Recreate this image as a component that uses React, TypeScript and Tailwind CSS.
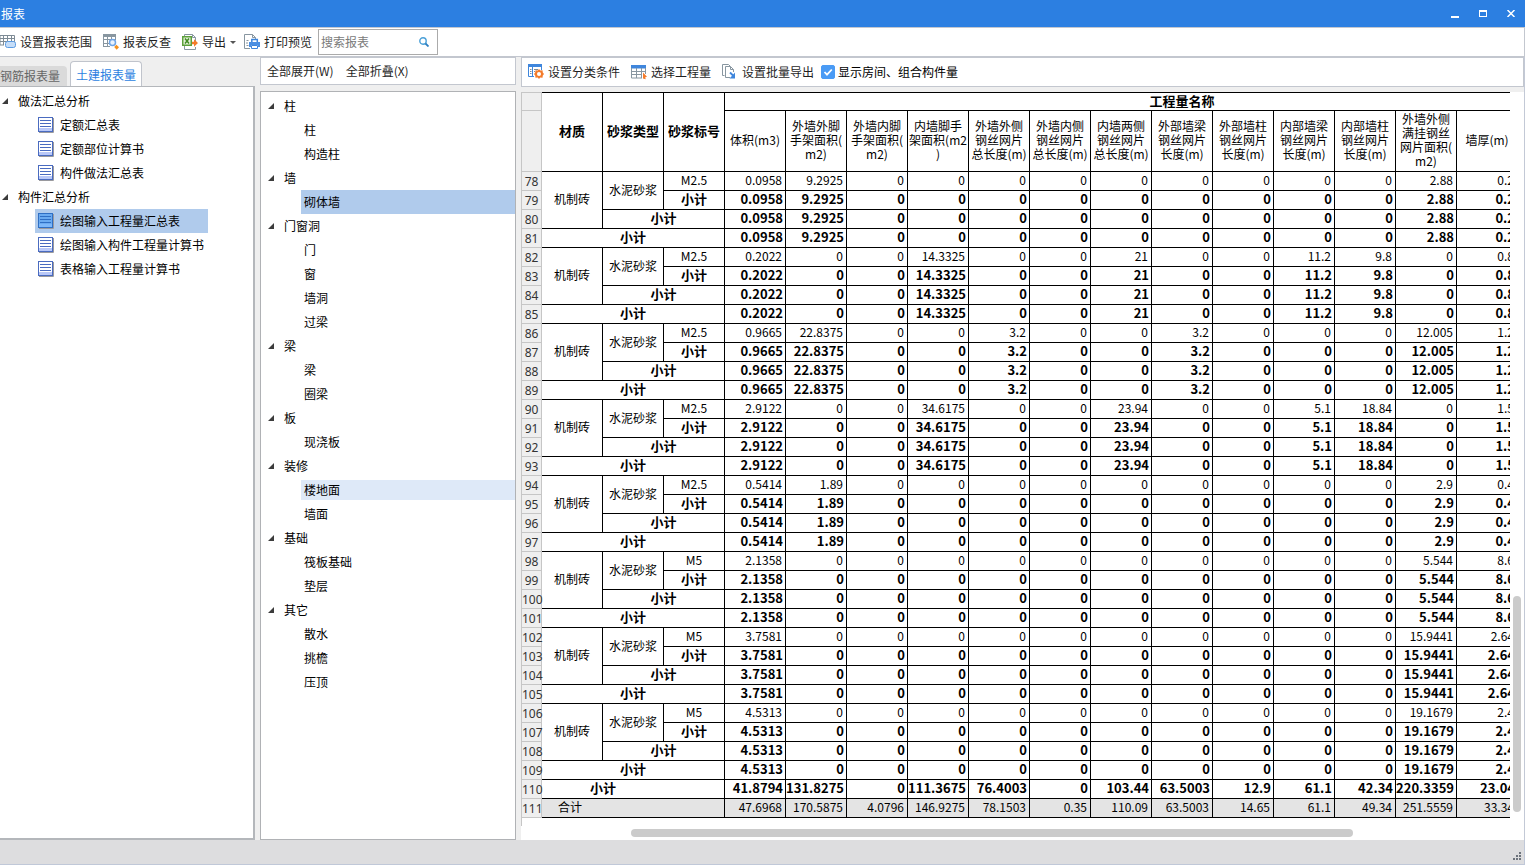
import type { ReactNode } from "react";

const sheetColumns = [
  ["体积(m3)"],
  ["外墙外脚", "手架面积(", "m2)"],
  ["外墙内脚", "手架面积(", "m2)"],
  ["内墙脚手", "架面积(m2", ")"],
  ["外墙外侧", "钢丝网片", "总长度(m)"],
  ["外墙内侧", "钢丝网片", "总长度(m)"],
  ["内墙两侧", "钢丝网片", "总长度(m)"],
  ["外部墙梁", "钢丝网片", "长度(m)"],
  ["外部墙柱", "钢丝网片", "长度(m)"],
  ["内部墙梁", "钢丝网片", "长度(m)"],
  ["内部墙柱", "钢丝网片", "长度(m)"],
  ["外墙外侧", "满挂钢丝", "网片面积(", "m2)"],
  ["墙厚(m)"],
];

const groups = [
  { start: 78, grade: "M2.5", values: "0.0958 9.2925 0 0 0 0 0 0 0 0 0 2.88 0.2" },
  { start: 82, grade: "M2.5", values: "0.2022 0 0 14.3325 0 0 21 0 0 11.2 9.8 0 0.8" },
  { start: 86, grade: "M2.5", values: "0.9665 22.8375 0 0 3.2 0 0 3.2 0 0 0 12.005 1.2" },
  { start: 90, grade: "M2.5", values: "2.9122 0 0 34.6175 0 0 23.94 0 0 5.1 18.84 0 1.5" },
  { start: 94, grade: "M2.5", values: "0.5414 1.89 0 0 0 0 0 0 0 0 0 2.9 0.4" },
  { start: 98, grade: "M5", values: "2.1358 0 0 0 0 0 0 0 0 0 0 5.544 8.6" },
  { start: 102, grade: "M5", values: "3.7581 0 0 0 0 0 0 0 0 0 0 15.9441 2.64" },
  { start: 106, grade: "M5", values: "4.5313 0 0 0 0 0 0 0 0 0 0 19.1679 2.4" },
];

const subtotal = "41.8794 131.8275 0 111.3675 76.4003 0 103.44 63.5003 12.9 61.1 42.34 220.3359 23.04";
const total = "47.6968 170.5875 4.0796 146.9275 78.1503 0.35 110.09 63.5003 14.65 61.1 49.34 251.5559 33.34";

const reportTree = [
  { name: "做法汇总分析", items: ["定额汇总表", "定额部位计算书", "构件做法汇总表"] },
  { name: "构件汇总分析", items: ["绘图输入工程量汇总表", "绘图输入构件工程量计算书", "表格输入工程量计算书"] },
];

const componentTree = [
  { name: "柱", items: ["柱", "构造柱"] },
  { name: "墙", items: ["砌体墙"] },
  { name: "门窗洞", items: ["门", "窗", "墙洞", "过梁"] },
  { name: "梁", items: ["梁", "圈梁"] },
  { name: "板", items: ["现浇板"] },
  { name: "装修", items: ["楼地面", "墙面"] },
  { name: "基础", items: ["筏板基础", "垫层"] },
  { name: "其它", items: ["散水", "挑檐", "压顶"] },
];

/* ---------- icons ---------- */

function RangeIcon() {
  return (
    <svg width="16" height="16" viewBox="0 0 16 16" fill="none">
      <path d="M0 1.5h14.5v7M0 1.5v9.500h4M0 4.500h14.500M0 7.500h14M3.500 1.500v9.500M7.500 1.500v6M11.500 1.500v6" stroke="#7e8b95" />
      <rect x="5.500" y="7.500" width="10" height="6" rx="2" fill="#c5ddf8" stroke="#5b9be2" />
    </svg>
  );
}

function CheckReportIcon() {
  return (
    <svg width="16" height="16" viewBox="0 0 16 16" fill="none">
      <path d="M0 0h13v3H0z" fill="#8896a0" />
      <path d="M.5 1v12M0 5.500h12M0 9.500h7M0 12.500h7M4.500 3v10M8.500 3v3M12.500 1v5" stroke="#8896a0" />
      <circle cx="9.500" cy="8.500" r="3" fill="#eaf3fd" stroke="#6fa5e6" strokeWidth="1.500" />
      <path d="M11.200 13l2.200-2.200 2.600 2.500-2.300 2.500z" fill="#f5921e" />
    </svg>
  );
}

function ExportIcon() {
  return (
    <svg width="16" height="16" viewBox="0 0 16 16" fill="none">
      <path d="M2.500 3V.5h8l3 3V7M10.500.5v3h3M2.500 12v3.500h11V13" stroke="#8896a0" />
      <rect x=".75" y="2.750" width="8.500" height="8.500" fill="#e6f2dc" stroke="#5da03c" strokeWidth="1.500" />
      <path d="M3 4.500l4 5M7 4.500l-4 5" stroke="#3f8a20" strokeWidth="1.500" />
      <path d="M10 7.800h2V5.300L16 9l-4 3.700v-2.500h-2z" fill="#f47b2a" />
    </svg>
  );
}

function PrintIcon() {
  return (
    <svg width="16" height="16" viewBox="0 0 16 16" fill="none">
      <path d="M6 14.500H.5V.5h8l3 3V5M8.500.5v3h3" stroke="#8896a0" />
      <path d="M2.500 6h2v1h-2zM2.500 8h1v2h-1zM2.500 11h2v1h-2z" fill="#8896a0" />
      <path d="M7.800 8.500v-3h5.500v3" stroke="#3f86dc" strokeWidth="1.500" />
      <path d="M5 8h11v5h-2v-2H7v2H5z" fill="#4b8fe2" />
      <path d="M7.500 11.500h6v3h-6z" fill="#fff" stroke="#3f86dc" />
    </svg>
  );
}

function ConditionIcon() {
  return (
    <svg width="16" height="16" viewBox="0 0 16 16" fill="none">
      <path d="M0 0h14v3H0z" fill="#3f86dc" />
      <path d="M.5 2v10.500H6M4.500 3v9.500M13.500 3v3" stroke="#3f86dc" />
      <path d="M2 5.500h1.500M2 7.500h1.500M2 9.500h1.500M6 5.500h4M6 7.500h1" stroke="#7e8b95" />
      <path d="M11 5l1.300 1.500 2.200-.2.300 2.200L16 10l-1.200 1.500-.3 2.200-2.200-.2L11 15l-1.300-1.500-2.200.2-.3-2.200L6 10l1.200-1.500.3-2.200 2.200.2z" fill="#f47b2a" />
      <circle cx="11" cy="10" r="2" fill="#fff" />
    </svg>
  );
}

function QuantityIcon() {
  return (
    <svg width="16" height="16" viewBox="0 0 16 16" fill="none">
      <path d="M0 1h15v3.500H0z" fill="#3f86dc" />
      <path d="M.5 4v10H11M0 7.500h14.500M0 10.500h11M5.500 4v10M10.500 4v10M14.500 4v6" stroke="#8896a0" />
      <path d="M12 8.500l4 4.300-1.800.4.500 2-2.700-.7z" fill="#f47b2a" />
    </svg>
  );
}

function BatchIcon() {
  return (
    <svg width="16" height="16" viewBox="0 0 16 16" fill="none">
      <path d="M2.500 11.500h-2V.5h6l1.500 1.500" stroke="#8896a0" />
      <path d="M8 13.500H3.500v-11h5l3 3V8M8.500 2.500v3h3" stroke="#8896a0" />
      <path d="M8 8.500l4 4" stroke="#3f86dc" strokeWidth="1.800" />
      <path d="M13 8.500v6H7.500z" fill="#3f86dc" />
    </svg>
  );
}

function ReportIcon({ active }: { active?: boolean }) {
  const line = active ? "#2f6fc4" : "#4a6bc0";
  return (
    <svg width="16" height="16" viewBox="0 0 16 16" fill="none" className="shrink-0">
      <path d="M1 15.500h14.500V1" stroke="#9a9a9e" />
      <rect x=".5" y=".5" width="14" height="14" fill={active ? "#6aaaf0" : "#fff"} stroke={line} />
      <path d="M1 11h13v3H1z" fill={active ? "#7db8fa" : "#b9c8f8"} />
      <path d="M2 3.500h11M2 6.500h11M2 9.500h11" stroke={line} />
    </svg>
  );
}

function Arrow() {
  return (
    <svg width="6" height="6" viewBox="0 0 6 6" className="shrink-0">
      <path d="M6 0v6H0z" fill="#3c3c3c" />
    </svg>
  );
}

/* ---------- parts ---------- */

function ToolButton({ icon, children }: { icon?: ReactNode; children: ReactNode }) {
  return (
    <button type="button" className="flex h-6 shrink-0 items-center gap-1 whitespace-nowrap text-[#1f1f1f]">
      {icon}
      {children}
    </button>
  );
}

function Values({ row, bold }: { row: string; bold?: boolean }) {
  return (
    <>
      {row.split(" ").map((value, i) => (
        <td
          key={i}
          className={`border-b border-r border-black pb-0.5 text-right ${bold ? "pr-0.5 text-[13px] font-bold" : "pr-[3px]"}`}
        >
          {value}
        </td>
      ))}
    </>
  );
}

function RowNumber({ n }: { n: number }) {
  return (
    <th scope="row" className="border-x border-b border-[#c6c6c6] bg-[#efefef] pt-0.5 font-['Noto_Sans','Open_Sans',sans-serif] font-normal text-[#333]">
      {n}
    </th>
  );
}

const cell = "border-b border-r border-black pb-0.5 text-center";
const boldCell = "border-b border-r border-black pb-0.5 text-center text-[13px] font-bold";

function Sheet() {
  return (
    <table className="w-[1119px] table-fixed border-separate border-spacing-0 whitespace-nowrap leading-[14px] text-black">
      <colgroup>
        <col className="w-[21px]" />
        <col span={18} className="w-[61px]" />
      </colgroup>
      <thead>
        <tr className="h-[19px]">
          <td className="border border-[#c6c6c6] bg-[#efefef]"></td>
          <th rowSpan={2} className={`${boldCell} border-t`}>材质</th>
          <th rowSpan={2} className={`${boldCell} border-t`}>砂浆类型</th>
          <th rowSpan={2} className={`${boldCell} border-t`}>砂浆标号</th>
          <th colSpan={15} className={`${boldCell} border-t`}>工程量名称</th>
        </tr>
        <tr className="h-[61px]">
          <td className="border-x border-b border-[#c6c6c6] bg-[#efefef]"></td>
          {sheetColumns.map((lines, i) => (
            <th key={i} className={`${cell} font-normal`}>
              {lines.map((line) => (
                <span key={line} className="block">{line}</span>
              ))}
            </th>
          ))}
        </tr>
      </thead>
      {groups.map((g) => (
        <tbody key={g.start}>
          <tr className="h-[19px]">
            <RowNumber n={g.start} />
            <td rowSpan={3} className={cell}>机制砖</td>
            <td rowSpan={2} className={cell}>水泥砂浆</td>
            <td className={cell}>{g.grade}</td>
            <Values row={g.values} />
          </tr>
          <tr className="h-[19px]">
            <RowNumber n={g.start + 1} />
            <td className={boldCell}>小计</td>
            <Values row={g.values} bold />
          </tr>
          <tr className="h-[19px]">
            <RowNumber n={g.start + 2} />
            <td colSpan={2} className={boldCell}>小计</td>
            <Values row={g.values} bold />
          </tr>
          <tr className="h-[19px]">
            <RowNumber n={g.start + 3} />
            <td colSpan={3} className={boldCell}>小计</td>
            <Values row={g.values} bold />
          </tr>
        </tbody>
      ))}
      <tfoot>
        <tr className="h-[19px]">
          <RowNumber n={110} />
          <td colSpan={3} className="border-b border-r border-black pb-0.5 pl-12 text-[13px] font-bold">小计</td>
          <Values row={subtotal} bold />
        </tr>
        <tr className="h-[19px] bg-[#e4e4e4]">
          <RowNumber n={111} />
          <td colSpan={3} className="border-b border-r border-black pb-0.5 pl-4">合计</td>
          <Values row={total} />
        </tr>
      </tfoot>
    </table>
  );
}

export default function App() {
  return (
    <div className="flex min-h-screen flex-col overflow-hidden bg-[#efefef] font-['Noto_Sans_CJK_SC',sans-serif] text-xs text-black">
      <header className="flex h-[27px] items-center justify-between bg-[#2c7fe1] pl-px text-white">
        <h1>报表</h1>
        <div className="flex items-center gap-3 pr-1.5">
          <button type="button" aria-label="最小化" className="flex w-4 justify-center">
            <svg width="8" height="8" viewBox="0 0 8 8"><path d="M0 6h8v2H0z" fill="#fff" /></svg>
          </button>
          <button type="button" aria-label="最大化" className="flex w-4 justify-center">
            <svg width="8" height="7" viewBox="0 0 8 7"><path d="M0 0h8v7H0zM1 2v4h6V2z" fill="#fff" fillRule="evenodd" /></svg>
          </button>
          <button type="button" aria-label="关闭" className="flex w-4 justify-center">
            <svg width="8" height="7" viewBox="0 0 8 7"><path d="M.5 0l7 7M7.500 0l-7 7" stroke="#fff" strokeWidth="1.500" /></svg>
          </button>
        </div>
      </header>

      <div className="flex h-[30px] items-center gap-[11px] border-y border-r border-[#c3c7cf] bg-white">
        <ToolButton icon={<RangeIcon />}>设置报表范围</ToolButton>
        <ToolButton icon={<CheckReportIcon />}>报表反查</ToolButton>
        <div className="flex gap-2">
          <ToolButton icon={<ExportIcon />}>
            导出
            <svg width="6" height="3" viewBox="0 0 6 3"><path d="M0 0h6L3 3z" fill="#555" /></svg>
          </ToolButton>
          <ToolButton icon={<PrintIcon />}>打印预览</ToolButton>
        </div>
        <div className="-ml-[5px] flex h-[26px] w-[120px] items-center border border-[#ababab] pl-0.5 pr-2">
          <input
            type="text"
            aria-label="搜索报表"
            placeholder="搜索报表"
            className="w-full min-w-0 bg-transparent outline-none placeholder:text-[#7a7a7a]"
          />
          <svg width="10" height="10" viewBox="0 0 10 10" fill="none" className="shrink-0">
            <circle cx="4" cy="4" r="3.200" stroke="#4ba0d8" strokeWidth="1.400" />
            <path d="M6.500 6.500l3 3" stroke="#2f7fc0" strokeWidth="1.800" />
          </svg>
        </div>
      </div>

      <main className="flex grow gap-[5px] border-r border-[#c3c9d6]">
        <section className="flex w-[255px] shrink-0 flex-col">
          <div className="flex h-[29px] items-end gap-[3px]">
            <button type="button" className="h-5 w-[67px] rounded-tr-sm bg-[#dadada] text-left text-[#666]">钢筋报表量</button>
            <button type="button" className="-mb-px h-[26px] w-[72px] rounded-t-sm border border-b-0 border-[#c0c4cc] bg-white text-[#2c7fe1]">
              土建报表量
            </button>
          </div>
          <div className="grow border-b-2 border-r-2 border-t border-[#b4b7bb] bg-white pt-0.5">
            <ul className="w-max">
              {reportTree.map((node) => (
                <li key={node.name}>
                  <div className="flex h-6 items-center gap-2.5 pl-0.5"><Arrow />{node.name}</div>
                  <ul>
                    {node.items.map((item) => (
                      <li
                        key={item}
                        className={`ml-[35px] flex h-6 items-center gap-1.5 pl-[3px] pr-1 ${item === "绘图输入工程量汇总表" ? "bg-[#b0cbec]" : ""}`}
                      >
                        <ReportIcon active={item === "绘图输入工程量汇总表"} />
                        {item}
                      </li>
                    ))}
                  </ul>
                </li>
              ))}
            </ul>
          </div>
        </section>

        <section className="flex w-64 shrink-0 flex-col gap-1.5">
          <div className="flex h-7 items-center gap-3 border border-[#c3c7cf] bg-white pl-1.5">
            <ToolButton>全部展开(W)</ToolButton>
            <ToolButton>全部折叠(X)</ToolButton>
          </div>
          <div className="grow border border-[#b0b2b5] bg-white pt-0.5">
            <ul>
              {componentTree.map((node) => (
                <li key={node.name}>
                  <div className="flex h-6 items-center gap-2.5 pl-[7px]"><Arrow />{node.name}</div>
                  <ul>
                    {node.items.map((item) => (
                      <li key={item} className="ml-10 flex h-6 items-center">
                        <span
                          className={`flex w-full items-center pl-[3px] ${item === "砌体墙" ? "h-6 bg-[#b0cbec]" : item === "楼地面" ? "h-5 bg-[#dee9f8]" : ""}`}
                        >
                          {item}
                        </span>
                      </li>
                    ))}
                  </ul>
                </li>
              ))}
            </ul>
          </div>
        </section>

        <section className="flex min-w-0 grow flex-col gap-[5px]">
          <div className="flex h-[30px] items-center gap-[11px] border border-[#c3c7cf] bg-white pl-1.5">
            <ToolButton icon={<ConditionIcon />}>设置分类条件</ToolButton>
            <ToolButton icon={<QuantityIcon />}>选择工程量</ToolButton>
            <ToolButton icon={<BatchIcon />}>设置批量导出</ToolButton>
            <label className="-ml-1 flex items-center gap-[3px] whitespace-nowrap">
              <span className="grid size-3.5">
                <input type="checkbox" defaultChecked className="peer col-start-1 row-start-1 size-3.5 appearance-none rounded-xs border border-[#4a9bf5] bg-white checked:bg-[#4a9bf5]" />
                <svg viewBox="0 0 14 14" fill="none" className="pointer-events-none invisible col-start-1 row-start-1 size-3.5 peer-checked:visible">
                  <path d="M3.500 7l2.500 2.700 4.800-5.200" stroke="#fff" strokeWidth="1.800" />
                </svg>
              </span>
              显示房间、组合构件量
            </label>
          </div>
          <div className="flex min-h-0 grow flex-col bg-white">
            <div className="flex grow">
              <div className="w-0 grow overflow-hidden border-l border-[#c6c6c6]">
                <div className="-ml-px"><Sheet /></div>
              </div>
              <div className="flex w-3.5 shrink-0 flex-col items-center justify-end pb-3.5">
                <div className="h-[216px] w-2 rounded-full bg-[#cbcbcb]"></div>
              </div>
            </div>
            <div className="flex h-3.5 items-center">
              <div className="ml-[11%] h-2 w-[72%] rounded-full bg-[#cbcbcb]"></div>
            </div>
          </div>
        </section>
      </main>

      <footer className="flex h-[25px] items-end justify-end border-b border-r border-[#c0c8d8] bg-[#dddddf] pb-0.5 pr-0.5">
        <svg width="10" height="10" viewBox="0 0 10 10" fill="#6d737c">
          <path d="M7 0h2v2H7zM4 3h2v2H4zM7 3h2v2H7zM1 6h2v2H1zM4 6h2v2H4zM7 6h2v2H7z" />
        </svg>
      </footer>
    </div>
  );
}
